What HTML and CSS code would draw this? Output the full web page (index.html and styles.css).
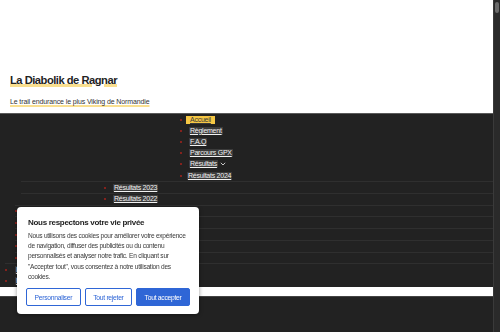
FILE: index.html
```html
<!DOCTYPE html>
<html lang="fr">
<head>
    <meta charset="UTF-8">
    <meta name="viewport" content="width=device-width, initial-scale=1.0">
    <title>La Diabolik de Ragnar</title>
    <link rel="stylesheet" href="styles.css">
</head>
<body>
    <div class="page">
        <div class="site">
            <header class="site-header">
                <h1 class="site-title">La Diabolik de Ragnar</h1>
                <p class="site-tagline">Le trail endurance le plus Viking de Normandie</p>
            </header>

            <nav class="main-nav">
                <ul class="menu">
                    <li class="menu-item"><a href="#" class="current">Accueil</a></li>
                    <li class="menu-item"><a href="#">Règlement</a></li>
                    <li class="menu-item"><a href="#">F.A.Q</a></li>
                    <li class="menu-item"><a href="#">Parcours GPX</a></li>
                    <li class="menu-item"><a href="#">Résultats</a>
                        <svg class="chevron" width="6" height="4" viewBox="0 0 6 4"><path d="M0.8 0.8 L3 3 L5.2 0.8" fill="none" stroke="#ddd" stroke-width="0.9"/></svg>
                    </li>
                    <li class="menu-item tight"><a href="#">Résultats 2024</a></li>
                </ul>

                <ul class="sub-menu">
                    <li class="sub-item mid"><a href="#">Résultats 2023</a></li>
                    <li class="sub-item mid"><a href="#">Résultats 2022</a></li>
                    <li class="sub-item left"><a href="#">Résultats 2021</a></li>
                    <li class="sub-item left"><a href="#">Résultats 2020</a></li>
                    <li class="sub-item left"><a href="#">Résultats 2019</a></li>
                    <li class="sub-item left"><a href="#">Résultats 2018</a></li>
                    <li class="sub-item left"><a href="#">Résultats 2017</a></li>
                    <li class="sub-item far"><a href="#">Les bénévoles</a></li>
                    <li class="sub-item far plain"><a href="#">Espace coureurs</a></li>
                </ul>
            </nav>

            <div class="search-bar"></div>
        </div>

        <div class="scrollbar"><div class="thumb"></div></div>
    </div>

    <div class="cookie-box">
        <h2>Nous respectons votre vie privée</h2>
        <p>Nous utilisons des cookies pour améliorer votre expérience<br>
        de navigation, diffuser des publicités ou du contenu<br>
        personnalisés et analyser notre trafic. En cliquant sur<br>
        "Accepter tout", vous consentez à notre utilisation des<br>
        cookies.</p>
        <div class="cookie-actions">
            <button class="btn btn-outline">Personnaliser</button>
            <button class="btn btn-outline">Tout rejeter</button>
            <button class="btn btn-primary">Tout accepter</button>
        </div>
    </div>
</body>
</html>
```

FILE: styles.css
```css
:root {
    --dark-bg: #222222;
    --line-color: #2f2f2f;
    --bullet: #a5231d;
    --highlight: #f6c744;
    --underline: #f9df8f;
    --blue: #2f66d6;
    --font: "Liberation Sans", Arial, sans-serif;
}

* {
    margin: 0;
    padding: 0;
    box-sizing: border-box;
}

body {
    font-family: var(--font);
    background-color: var(--dark-bg);
    color: #fff;
    height: 332px;
    overflow: hidden;
}

.page {
    display: flex;
    height: 332px;
}

.site {
    flex: 1;
}

.scrollbar {
    width: 7px;
    background-color: #2a2a2a;
    border-left: 1px solid #3a3a3a;
    padding: 2px 1px;
}

.thumb {
    height: 11px;
    background-color: #6b6b6b;
    border-radius: 2px;
}

/* header */

.site-header {
    background-color: #fff;
    height: 114px;
    border-bottom: 1px solid #5a5a5a;
    padding: 72px 10px 0;
    color: #222;
}

.site-title {
    font-size: 11.2px;
    font-weight: 700;
    line-height: 16px;
    letter-spacing: -0.5px;
    text-decoration: underline;
    text-decoration-color: var(--underline);
    text-decoration-thickness: 3px;
    text-underline-offset: 0px;
}

.site-tagline {
    margin-top: 9px;
    font-size: 7px;
    line-height: 10px;
    letter-spacing: -0.12px;
    color: #333;
    text-decoration: underline;
    text-decoration-color: var(--underline);
    text-decoration-thickness: 1.5px;
    text-underline-offset: 1px;
}

/* navigation */

.main-nav {
    font-size: 7px;
    letter-spacing: -0.25px;
}

.menu {
    list-style: none;
    padding-left: 180px;
}

.menu-item,
.sub-item {
    display: flex;
    align-items: center;
    gap: 1px;
    height: 11.2px;
}

.menu-item::before,
.sub-item::before {
    content: "";
    width: 2px;
    height: 2px;
    border-radius: 1px;
    background-color: var(--bullet);
    margin-right: 6px;
}

.menu-item.tight::before {
    margin-right: 4px;
}

.main-nav a {
    color: #f2f2f2;
    text-decoration: underline;
    text-underline-offset: 1px;
    background-color: #3b3b3b;
    padding: 0 1px;
    line-height: 8px;
}

.main-nav a.current {
    background-color: var(--highlight);
    color: #3a3a3a;
    padding: 0 4px;
    margin-left: -3px;
}

.chevron {
    margin-left: 1px;
}

.sub-menu {
    list-style: none;
    margin-left: 21px;
}

.sub-item {
    height: 11.75px;
    border-top: 1px solid var(--line-color);
}

.sub-item.mid {
    padding-left: 83px;
}

.sub-item.left {
    margin-left: -6px;
    padding-left: 0;
}

.sub-item.far {
    margin-left: -16px;
}

.sub-item.far::before {
    margin-right: 7px;
}

.sub-item.plain {
    border-top: none;
}

.search-bar {
    height: 10px;
    background-color: #fff;
    border-bottom: 1px solid #444;
}

/* cookie consent */

.cookie-box {
    position: fixed;
    left: 17px;
    top: 207px;
    width: 182px;
    height: 107px;
    background-color: #fff;
    color: #222;
    border-radius: 4px;
    box-shadow: 0 1px 4px rgba(0,0,0,0.4);
    padding: 10px 10px 8px 11px;
}

.cookie-box h2 {
    font-size: 8px;
    font-weight: 700;
    line-height: 11px;
    letter-spacing: -0.3px;
    color: #212121;
    margin-bottom: 3px;
}

.cookie-box p {
    font-size: 6.6px;
    line-height: 10.2px;
    letter-spacing: -0.26px;
    color: #3a3a3a;
    white-space: nowrap;
}

.cookie-actions {
    display: flex;
    gap: 4px;
    margin-top: 6px;
    margin-left: -2px;
}

.btn {
    flex-shrink: 0;
    white-space: nowrap;
    height: 18px;
    padding: 0 7.5px;
    font-family: var(--font);
    font-size: 6.8px;
    letter-spacing: -0.3px;
    border-radius: 2px;
    cursor: pointer;
}

.btn-outline {
    background-color: #fff;
    color: var(--blue);
    border: 1px solid var(--blue);
}

.btn-primary {
    background-color: var(--blue);
    color: #fff;
    border: 1px solid var(--blue);
}
```
